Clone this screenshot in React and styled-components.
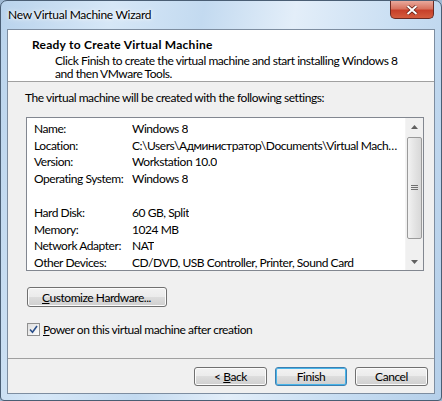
import styled, { createGlobalStyle } from "styled-components";

const Global = createGlobalStyle`
  html, body { margin:0; padding:0; background:#9fb9d3; }
  body { font-family:Lato,"Liberation Sans",sans-serif; font-size:12px; letter-spacing:-0.45px; color:#000; }
  #root { width:442px; height:401px; }
`;

const Window = styled.div`
  width:442px;
  height:401px;
  box-sizing:border-box;
  border:1px solid #4a5e74;
  border-radius:7px 7px 4px 4px;
  background:linear-gradient(100deg,#b9d3ec 0%,#d6e7f7 22%,#c3daf0 40%,#e3eef9 58%,#c7ddf2 80%,#b5cfe9 100%);
  display:flex;
  flex-direction:column;
  padding:0 6px 6px 6px;
  overflow:hidden;
  white-space:nowrap;
`;

const TitleBar = styled.div`
  height:28px;
  display:flex;
  align-items:center;
  justify-content:space-between;
`;

const TitleText = styled.span`
  font-size:12px;
  letter-spacing:-0.3px;
  margin-left:1px;
  margin-top:-2px;
  color:#000;
  text-shadow:0 0 6px #fff, 0 0 3px #fff;
`;

const CloseButton = styled.div`
  width:44px;
  height:18px;
  align-self:flex-start;
  margin-right:1px;
  box-sizing:border-box;
  border:1px solid #6b2a22;
  border-top:none;
  border-radius:0 0 5px 5px;
  background:linear-gradient(#e9a99c 0%,#d8735f 45%,#c7402a 55%,#d45c3e 100%);
  display:flex;
  align-items:center;
  justify-content:center;
`;

const Client = styled.div`
  flex:1;
  border:1px solid #7d8da0;
  background:#f0f0f0;
  display:flex;
  flex-direction:column;
`;

const Header = styled.div`
  height:52px;
  background:#fff;
  border-bottom:1px solid #a0a0a0;
  box-sizing:border-box;
  padding:7px 0 0 24px;
`;

const HeaderTitle = styled.div`
  font-weight:bold;
  font-size:12px;
  letter-spacing:0.25px;
  line-height:16px;
`;

const HeaderText = styled.div`
  margin-left:23px;
  line-height:13px;
  margin-top:1px;
`;

const Body = styled.div`
  flex:1;
  padding:8px 10px 0 18px;
  display:flex;
  flex-direction:column;
`;

const Intro = styled.div`
  line-height:16px;
  margin-left:-1px;
`;

const ListBox = styled.div`
  margin-top:11px;
  height:154px;
  box-sizing:border-box;
  border:1px solid #828790;
  background:#fff;
  display:flex;
  overflow:hidden;
`;

const Rows = styled.div`
  flex:1;
  min-width:0;
  padding:2px 6px 0 7px;
`;

const Row = styled.div`
  display:flex;
  height:16.8px;
  align-items:center;
  white-space:nowrap;
`;

const Label = styled.span`
  width:98px;
  flex:none;
`;

const Value = styled.span`
  overflow:hidden;
  text-overflow:ellipsis;
`;

const Spacer = styled.div`
  height:16.8px;
`;

const ScrollBar = styled.div`
  width:17px;
  flex:none;
  background:#f0f0f0;
  border-left:1px solid #f4f4f4;
  display:flex;
  flex-direction:column;
  align-items:center;
`;

const Arrow = styled.div`
  height:17px;
  width:17px;
  display:flex;
  align-items:center;
  justify-content:center;
`;

const Thumb = styled.div`
  width:15px;
  height:102px;
  margin-top:2px;
  box-sizing:border-box;
  border:1px solid #9a9a9a;
  border-radius:2px;
  background:linear-gradient(90deg,#f2f2f2,#e4e4e4 50%,#d8d8d8);
  display:flex;
  align-items:center;
  justify-content:center;
`;

const Track = styled.div`
  flex:1;
`;

const Button = styled.button`
  box-sizing:border-box;
  width:${p => p.$w}px;
  height:${p => p.$h || 19}px;
  font-family:inherit;
  font-size:12px;
  letter-spacing:inherit;
  white-space:nowrap;
  padding:0;
  border:1px solid ${p => (p.$default ? "#3c7fb1" : "#707070")};
  border-radius:3px;
  background:linear-gradient(#f2f2f2 0%,#ebebeb 49%,#dddddd 50%,#cfcfcf 100%);
  box-shadow:inset 0 0 0 1px ${p => (p.$default ? "#48b4e8" : "#fcfcfc")};
  color:#000;
  text-align:${p => p.$align || "center"};
  padding-left:${p => p.$pad || 0}px;
`;

const Customize = styled.div`
  margin-top:16px;
  margin-left:1px;
`;

const CheckRow = styled.label`
  margin-top:15px;
  margin-left:1px;
  display:flex;
  align-items:center;
  gap:3px;
`;

const CheckBox = styled.span`
  width:13px;
  height:13px;
  box-sizing:border-box;
  border:1px solid #8f8f8f;
  background:linear-gradient(135deg,#dedede,#fdfdfd);
  display:flex;
  align-items:center;
  justify-content:center;
`;

const Footer = styled.div`
  height:35px;
  border-top:1px solid #a0a0a0;
  box-sizing:border-box;
  display:flex;
  justify-content:flex-end;
  gap:8px;
  padding:8px 6px 0 0;
`;

const U = styled.span`
  text-decoration:underline;
`;

const rows = [
  ["Name:", "Windows 8"],
  ["Location:", "C:\\Users\\Администратор\\Documents\\Virtual Machines\\Windows 8"],
  ["Version:", "Workstation 10.0"],
  ["Operating System:", "Windows 8"],
  null,
  ["Hard Disk:", "60 GB, Split"],
  ["Memory:", "1024 MB"],
  ["Network Adapter:", "NAT"],
  ["Other Devices:", "CD/DVD, USB Controller, Printer, Sound Card"],
];

export default function App() {
  return (
    <>
      <Global />
      <Window>
        <TitleBar>
          <TitleText>New Virtual Machine Wizard</TitleText>
          <CloseButton>
            <svg width="12" height="10" viewBox="0 0 12 10">
              <path d="M1.5 1 L10.5 9 M10.5 1 L1.5 9" stroke="#5a1a10" strokeWidth="3.4" />
              <path d="M1.5 1 L10.5 9 M10.5 1 L1.5 9" stroke="#fff" strokeWidth="2" />
            </svg>
          </CloseButton>
        </TitleBar>
        <Client>
          <Header>
            <HeaderTitle>Ready to Create Virtual Machine</HeaderTitle>
            <HeaderText>
              Click Finish to create the virtual machine and start installing Windows 8
              <br />
              and then VMware Tools.
            </HeaderText>
          </Header>
          <Body>
            <Intro>The virtual machine will be created with the following settings:</Intro>
            <ListBox>
              <Rows>
                {rows.map((r, i) =>
                  r ? (
                    <Row key={i}>
                      <Label>{r[0]}</Label>
                      <Value>{r[1]}</Value>
                    </Row>
                  ) : (
                    <Spacer key={i} />
                  )
                )}
              </Rows>
              <ScrollBar>
                <Arrow>
                  <svg width="7" height="4" viewBox="0 0 7 4"><path d="M0 4 L3.5 0 L7 4Z" fill="#606060" /></svg>
                </Arrow>
                <Thumb>
                  <svg width="7" height="6" viewBox="0 0 7 6">
                    <path d="M0 0.5H7M0 2.5H7M0 4.5H7" stroke="#707070" strokeWidth="1" />
                  </svg>
                </Thumb>
                <Track />
                <Arrow>
                  <svg width="7" height="4" viewBox="0 0 7 4"><path d="M0 0 L7 0 L3.5 4Z" fill="#606060" /></svg>
                </Arrow>
              </ScrollBar>
            </ListBox>
            <Customize>
              <Button $w={140} $h={20} $align="left" $pad={14}>
                <U>C</U>ustomize Hardware...
              </Button>
            </Customize>
            <CheckRow>
              <CheckBox>
                <svg width="9" height="9" viewBox="0 0 9 9">
                  <path d="M1 4.5 L3.5 7.2 L8 1" stroke="#2a4f8a" strokeWidth="1.6" fill="none" />
                </svg>
              </CheckBox>
              <span>
                <U>P</U>ower on this virtual machine after creation
              </span>
            </CheckRow>
          </Body>
          <Footer>
            <Button $w={73}>
              &lt; <U>B</U>ack
            </Button>
            <Button $w={72} $default>
              Finish
            </Button>
            <Button $w={73}>Cancel</Button>
          </Footer>
        </Client>
      </Window>
    </>
  );
}
